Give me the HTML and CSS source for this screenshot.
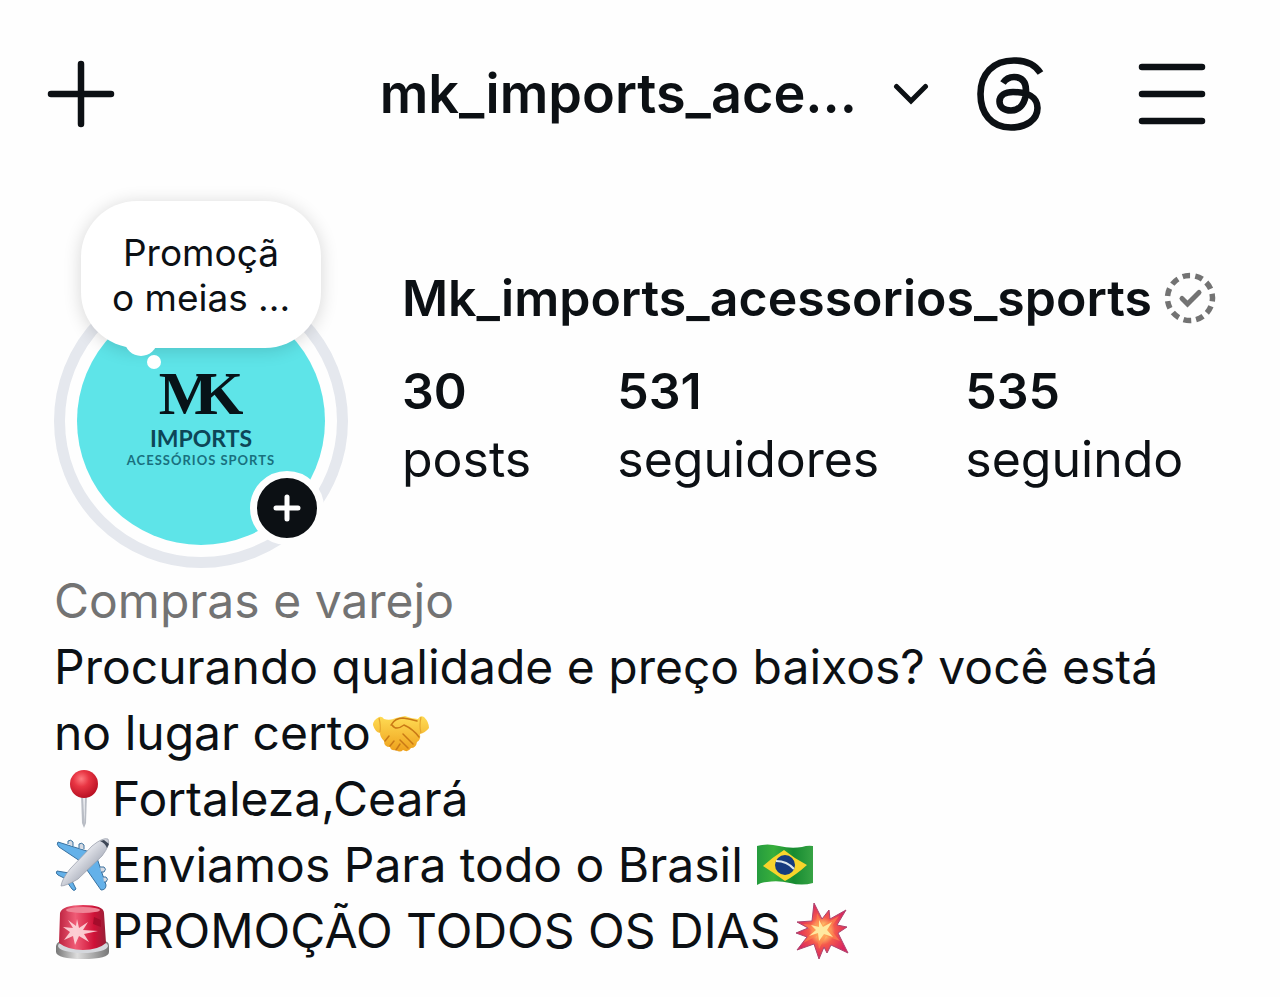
FILE: index.html
```html
<!DOCTYPE html>
<html lang="pt-BR">
<head>
  <meta charset="UTF-8">
  <meta name="viewport" content="width=device-width, initial-scale=1">
  <title>mk_imports_acessorios_sports</title>
  <link rel="stylesheet" href="styles.css">
</head>
<body>
  <header class="topbar">
    <button type="button" class="icon-btn" aria-label="Criar">
      <svg width="68" height="68" viewBox="0 0 68 68" fill="none" stroke="#0c1014" stroke-width="6.5" stroke-linecap="round">
        <path d="M34 4v60M4 34h60"/>
      </svg>
    </button>
    <button type="button" class="account">
      <span class="account-name">mk_imports_ace...</span>
      <svg width="36" height="22" viewBox="0 0 36 22" fill="none" stroke="#0c1014" stroke-width="5" stroke-linecap="round">
        <path d="M3.500 3.500L18 18L32.500 3.500"/>
      </svg>
    </button>
    <button type="button" class="icon-btn" aria-label="Threads">
      <svg width="68" height="74" viewBox="0 0 68 74" fill="none" stroke="#0c1014" stroke-width="6.600">
        <path d="M26 26C29 21.500 33 20 37 20C45 20 49 25 49 33C49 46 43 53.500 34 53.500C27 53.500 22.500 50 22.500 44.500C22.500 38.500 28 35 36 35C50 35 60.500 40 60.500 51C60.500 63 49 70.500 34 70.500C14 70.500 3.500 56 3.500 37C3.500 17 16 3.500 37 3.500C49 3.500 58 7.500 63.500 16"/>
      </svg>
    </button>
    <button type="button" class="icon-btn menu-btn" aria-label="Menu">
      <svg width="68" height="62" viewBox="0 0 68 62" fill="none" stroke="#0c1014" stroke-width="6.500" stroke-linecap="round">
        <path d="M4 4h60M4 31h60M4 58h60"/>
      </svg>
    </button>
  </header>

  <main class="profile">
    <section class="summary">
      <div class="avatar-ring">
        <div class="avatar">
          <span class="logo-mark">MK</span>
          <span class="logo-name">IMPORTS</span>
          <span class="logo-sub">ACESSÓRIOS SPORTS</span>
        </div>
        <div class="note">Promoçã<br>o meias ...</div>
        <button type="button" class="add-story" aria-label="Adicionar story">
          <svg width="28" height="28" viewBox="0 0 28 28" fill="none" stroke="#fff" stroke-width="5" stroke-linecap="round">
            <path d="M14 3v22M3 14h22"/>
          </svg>
        </button>
      </div>

      <div class="details">
        <div class="name-row">
          <h1>Mk_imports_acessorios_sports</h1>
          <svg width="52" height="52" viewBox="0 0 52 52" fill="none" stroke="#737373">
            <circle cx="26" cy="26" r="22.500" stroke-width="5.500" pathLength="110" stroke-dasharray="6 4" transform="rotate(-11 26 26)"/>
            <path d="M18 26.500L23.500 32L35 20.500" stroke-width="5" stroke-linecap="round"/>
          </svg>
        </div>
        <ul class="stats">
          <li><strong>30</strong><span>posts</span></li>
          <li><strong>531</strong><span>seguidores</span></li>
          <li><strong>535</strong><span>seguindo</span></li>
        </ul>
      </div>
    </section>

    <section class="bio">
      <p class="category">Compras e varejo</p>
      <p>Procurando qualidade e preço baixos? você está<br>
        no lugar certo<svg class="emoji" viewBox="0 0 58 58" role="img" aria-label="aperto de mãos">
          <defs>
            <linearGradient id="skin" x1="0" y1="0" x2="0" y2="1">
              <stop offset="0" stop-color="#ffdc55"/>
              <stop offset="1" stop-color="#eea11c"/>
            </linearGradient>
          </defs>
          <path d="M2 21Q2 16 8 13Q11 12 13 15Q19 17 25 14L34 12Q41 15 47 15Q49 11 53 13Q58 18 58 24Q54 29 49 30Q50 36 46 38Q45 44 40 44Q37 49 32 46Q29 49 25 46Q20 47 19 43Q13 43 13 37Q9 33 9 29Q4 28 2 21Z" fill="url(#skin)"/>
          <path d="M20 21Q24 14 32 14Q39 15 46 17M21 21Q25 27 33 21Q42 25 48 33M32 30L42 40M29 36L37 44M14 37L18 32M19 42L23 37M25 46L29 40" fill="none" stroke="#c97916" stroke-width="1.500" stroke-linecap="round"/>
          <path d="M8 14Q10 22 9 28M50 13Q48 22 50 29" fill="none" stroke="#e4a62e" stroke-width="1.200"/>
        </svg><br>
        <svg class="emoji" viewBox="0 0 58 58" role="img" aria-label="alfinete">
          <defs>
            <radialGradient id="pin" cx=".4" cy=".32" r=".7">
              <stop offset="0" stop-color="#ff7b80"/>
              <stop offset=".4" stop-color="#e83543"/>
              <stop offset="1" stop-color="#b70f22"/>
            </radialGradient>
          </defs>
          <path d="M27 24H33L32 53L30 58L28 53Z" fill="#b9bdc5"/>
          <path d="M29 26H31L30.500 54Z" fill="#eceef2"/>
          <circle cx="30" cy="14" r="14" fill="url(#pin)"/>
        </svg>Fortaleza,Ceará<br>
        <svg class="emoji" viewBox="0 0 58 58" role="img" aria-label="avião">
          <defs>
            <linearGradient id="body" x1="0" y1="0" x2="1" y2="1">
              <stop offset=".3" stop-color="#f5f6fa"/>
              <stop offset=".7" stop-color="#a6abb8"/>
            </linearGradient>
          </defs>
          <g fill="#64b1e9" stroke="#39719f" stroke-width="1">
            <path d="M36 16L4 6Q2 8 5 11L26 25Z"/>
            <path d="M43 22L52 49Q52 54 47 54L33 34Z"/>
            <path d="M15 37L3 35Q1 37 4 39L12 43Z"/>
            <path d="M17 43L22 53Q20 56 18 53L13 46Z"/>
            <path d="M14 8v-3q3-2 5 1v4M25 12v-4q3-2 5 1v4M46 31h4q3 2 0 5h-3M49 41h3q3 2 0 5h-2" fill="#d6dae2"/>
          </g>
          <path d="M7 50Q8 43 16 33L38 10Q49 1 54 3Q57 8 48 20L24 43Q12 50 7 50Z" fill="url(#body)" stroke="#9ca1ad" stroke-width=".8"/>
          <path d="M46 5L50 4L55 8L53 12Q51 7 46 5Z" fill="#3d4655"/>
        </svg>Enviamos Para todo o Brasil <svg class="emoji" viewBox="0 0 58 58" role="img" aria-label="bandeira do Brasil">
          <defs>
            <linearGradient id="flag">
              <stop offset="0" stop-color="#259b3e"/>
              <stop offset=".3" stop-color="#38af3c"/>
              <stop offset=".65" stop-color="#168b31"/>
              <stop offset="1" stop-color="#37a344"/>
            </linearGradient>
          </defs>
          <path d="M1 10Q11 7 23 10T46 11Q52 9 57 10V47Q46 50 34 47T11 46Q6 46 1 49Z" fill="url(#flag)"/>
          <path d="M7 30Q17 21 28 14Q39 23 51 29Q40 39 29 45Q18 37 7 30Z" fill="#f8d42c"/>
          <circle cx="29" cy="29" r="10" fill="#163b7e"/>
          <path d="M20 25Q31 25 38 33" fill="none" stroke="#dce7ed" stroke-width="2"/>
        </svg><br>
        <svg class="emoji" viewBox="0 0 58 58" role="img" aria-label="sirene">
          <defs>
            <linearGradient id="siren">
              <stop offset="0" stop-color="#bd2441"/>
              <stop offset=".35" stop-color="#f05c76"/>
              <stop offset=".75" stop-color="#cf1137"/>
              <stop offset="1" stop-color="#972037"/>
            </linearGradient>
            <linearGradient id="base">
              <stop offset="0" stop-color="#777"/>
              <stop offset=".4" stop-color="#ddd"/>
              <stop offset="1" stop-color="#777"/>
            </linearGradient>
          </defs>
          <path d="M2 44Q3 39 9 39H49Q55 39 55 44V50Q55 57 29 57T2 50Z" fill="url(#base)"/>
          <ellipse cx="29" cy="44" rx="25" ry="7" fill="#d5d7dc"/>
          <path d="M5 41L6 11Q8 3 29 3T50 11L52 41Q44 48 29 48T5 41Z" fill="url(#siren)"/>
          <ellipse cx="29" cy="8" rx="17" ry="3" fill="#ef8496"/>
          <path d="M23 17L25 26L34 20L29 28L44 29L30 32L35 40L25 34L21 43L19 34L10 38L16 30L9 25L19 26L14 18L22 24Z" fill="#ffe3e5" opacity=".85"/>
          <path d="M40 15L47 18V25L39 22Z" fill="#a50c2b"/>
        </svg>PROMOÇÃO TODOS OS DIAS <svg class="emoji" viewBox="0 0 58 58" role="img" aria-label="explosão">
          <defs>
            <radialGradient id="boom">
              <stop offset="0" stop-color="#fffbd0"/>
              <stop offset=".2" stop-color="#ffd06c"/>
              <stop offset=".5" stop-color="#f5594c"/>
              <stop offset="1" stop-color="#d9265f"/>
            </radialGradient>
          </defs>
          <path d="M20 1L28 17L35 8L36 17L52 8L43 23L53 25L44 31L54 51L37 43L33 51L30 45L25 57L20 42L3 48L13 35L2 31L14 26L3 20L18 19Z" fill="url(#boom)" stroke="#ad456f" stroke-width="1"/>
          <path d="M23 11L29 23L45 14L36 27L46 39L32 34L25 47L23 34L9 41L19 29L9 22L22 23Z" fill="#ff8a4c" opacity=".6"/>
          <path d="M25 18L29 25L38 20L33 28L39 35L30 32L25 39L24 31L15 34L22 28L17 23L25 25Z" fill="#ffe9a0"/>
        </svg>
      </p>
    </section>
  </main>
</body>
</html>
```
FILE: styles.css
```css
* {
  box-sizing: border-box;
}

body {
  margin: 0;
  background: #fefefe;
  color: #0c1014;
  font-family: Inter, "Noto Sans", sans-serif;
}

button {
  padding: 0;
  border: none;
  background: none;
  color: inherit;
  font-family: inherit;
  cursor: pointer;
}

svg {
  display: block;
  flex-shrink: 0;
}

/* top bar */
.topbar {
  display: flex;
  align-items: center;
  height: 188px;
  padding: 0 74px 0 47px;
}

.account {
  display: flex;
  align-items: center;
  gap: 36px;
  margin-left: auto;
  margin-right: 48px;
}

.account-name {
  font-size: 54px;
  font-weight: 600;
  line-height: 66px;
}

.menu-btn {
  margin-left: 93px;
}

/* avatar, name and counters */
.profile {
  padding: 0 54px;
}

.summary {
  display: flex;
  gap: 54px;
  padding-top: 86px;
}

.avatar-ring {
  position: relative;
  flex-shrink: 0;
  width: 294px;
  height: 294px;
  padding: 12px;
  border: 11px solid #e5e8ee;
  border-radius: 50%;
}

.avatar {
  display: flex;
  flex-direction: column;
  align-items: center;
  height: 100%;
  padding-top: 64px;
  border-radius: 50%;
  background: #5ee4e8;
}

/* the two letters of the monogram share a stem */
.logo-mark {
  padding-right: 22px;
  font-family: "Liberation Serif", serif;
  font-size: 62px;
  font-weight: 700;
  line-height: 64px;
  letter-spacing: -22px;
  color: #071318;
}

.logo-name {
  font-family: Lato, sans-serif;
  font-size: 23px;
  font-weight: 700;
  line-height: 26px;
  color: #0d4657;
}

.logo-sub {
  font-family: Lato, sans-serif;
  font-size: 13px;
  font-weight: 700;
  line-height: 18px;
  letter-spacing: 1px;
  color: #19707e;
}

.note {
  position: absolute;
  top: -84px;
  left: 16px;
  width: 240px;
  padding: 29px 0 28px;
  border-radius: 56px;
  background: #fff;
  box-shadow: 0 2px 18px rgba(0, 0, 0, .16);
  font-size: 37px;
  line-height: 45px;
  text-align: center;
}

.note::before,
.note::after {
  content: "";
  position: absolute;
  background: #fff;
  border-radius: 50%;
}

.note::before {
  left: 44px;
  bottom: -8px;
  width: 32px;
  height: 30px;
}

.note::after {
  left: 66px;
  bottom: -21px;
  width: 14px;
  height: 14px;
}

.add-story {
  position: absolute;
  right: 13px;
  bottom: 12px;
  display: flex;
  align-items: center;
  justify-content: center;
  width: 74px;
  height: 74px;
  border: 7px solid #fefefe;
  border-radius: 50%;
  background: #0c1014;
}

.details {
  flex: 1;
}

.name-row {
  display: flex;
  align-items: center;
  gap: 12px;
  height: 48px;
}

h1 {
  margin: 0;
  font-size: 50px;
  font-weight: 600;
  line-height: 66px;
}

.stats {
  display: flex;
  gap: 86px;
  margin: 35px 0 0;
  padding: 0;
  list-style: none;
}

.stats strong,
.stats span {
  display: block;
  font-size: 50px;
  line-height: 68px;
}

.stats strong {
  font-weight: 600;
}

/* bio */
.bio {
  font-size: 48px;
  line-height: 66px;
}

.bio p {
  margin: 0;
}

.bio .category {
  color: #737373;
}

.emoji {
  display: inline-block;
  width: 58px;
  height: 58px;
  vertical-align: -12px;
}
```
